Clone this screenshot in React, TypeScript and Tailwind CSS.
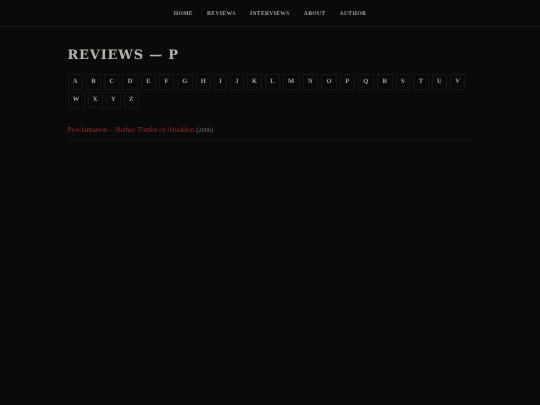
const letters: [string, string][] = [
  ["A", "w-[15.3px]"], ["B", "w-[15.3px]"], ["C", "w-[15.3px]"], ["D", "w-[15.3px]"], ["E", "w-[15.6px]"], ["F", "w-[14.4px]"],
  ["G", "w-[16px]"], ["H", "w-[15.4px]"], ["I", "w-[12.7px]"], ["J", "w-[14px]"], ["K", "w-[15.4px]"], ["L", "w-[14.6px]"],
  ["M", "w-[16.8px]"], ["N", "w-[15.4px]"], ["O", "w-[16px]"], ["P", "w-[14.6px]"], ["Q", "w-[16.6px]"], ["R", "w-[15.4px]"],
  ["S", "w-[14.7px]"], ["T", "w-[15.4px]"], ["U", "w-[15.4px]"], ["V", "w-[15.4px]"], ["W", "w-[17px]"], ["X", "w-[15.4px]"],
  ["Y", "w-[14.7px]"], ["Z", "w-[15.4px]"],
];
const nav = ["HOME", "REVIEWS", "INTERVIEWS", "ABOUT", "AUTHOR"];

export default function App() {
  return (
    <div className="w-[540px] h-[405px] bg-[#0a0a0a] overflow-hidden font-['Liberation_Serif',serif]">
      <div className="blur-[0.25px] [text-rendering:geometricPrecision]">
        <nav className="h-[27px] pt-[2px] border-b border-[#171717] flex items-center justify-center gap-[14px]">
          {nav.map((n) => (
            <a key={n} className="text-[5.6px] font-bold tracking-[0.37px] text-[#a8a49c]">{n}</a>
          ))}
        </nav>
        <main className="w-[405px] ml-[67.5px] pt-[20px]">
          <h1 className="font-['DejaVu_Serif',serif] text-[13px] leading-[18px] font-bold tracking-[0.8px] text-[#b8b4ab]">REVIEWS — P</h1>
          <div className="mt-[9px] w-[405px] flex flex-wrap gap-x-[3px] gap-y-[2.7px]">
            {letters.map(([l, w]) => (
              <a key={l} className={`${w} h-[15.7px] border border-[#171717] flex items-center justify-center text-[6.5px] font-bold text-[#a8a49c]`}>{l}</a>
            ))}
          </div>
          <div className="mt-[16px] pb-[4px] border-b border-[#171717] text-[7.5px] leading-[11px] whitespace-nowrap">
            <a className="text-[#a02a20]">Proclamation – Nether Tombs of Abaddon</a>
            <span className="text-[#77736c] text-[6.5px]"> (2006)</span>
          </div>
        </main>
      </div>
    </div>
  );
}
